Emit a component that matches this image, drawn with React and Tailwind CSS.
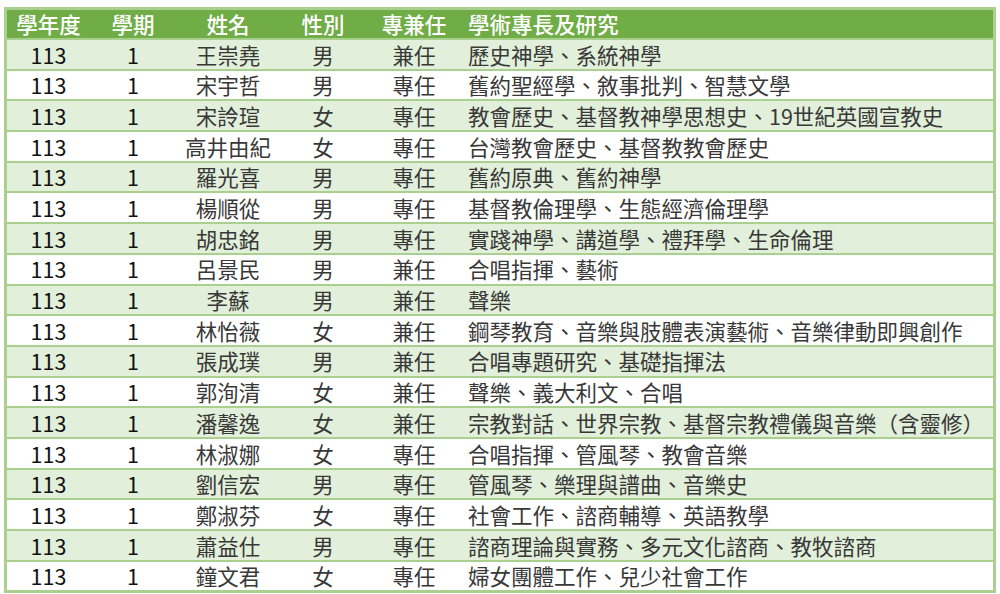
const rows = [
  ["王崇堯", "男", "兼任", "歷史神學、系統神學"],
  ["宋宇哲", "男", "專任", "舊約聖經學、敘事批判、智慧文學"],
  ["宋詅瑄", "女", "專任", "教會歷史、基督教神學思想史、19世紀英國宣教史"],
  ["高井由紀", "女", "專任", "台灣教會歷史、基督教教會歷史"],
  ["羅光喜", "男", "專任", "舊約原典、舊約神學"],
  ["楊順從", "男", "專任", "基督教倫理學、生態經濟倫理學"],
  ["胡忠銘", "男", "專任", "實踐神學、講道學、禮拜學、生命倫理"],
  ["呂景民", "男", "兼任", "合唱指揮、藝術"],
  ["李蘇", "男", "兼任", "聲樂"],
  ["林怡薇", "女", "兼任", "鋼琴教育、音樂與肢體表演藝術、音樂律動即興創作"],
  ["張成璞", "男", "兼任", "合唱專題研究、基礎指揮法"],
  ["郭洵清", "女", "兼任", "聲樂、義大利文、合唱"],
  ["潘馨逸", "女", "兼任", "宗教對話、世界宗教、基督宗教禮儀與音樂（含靈修）"],
  ["林淑娜", "女", "專任", "合唱指揮、管風琴、教會音樂"],
  ["劉信宏", "男", "專任", "管風琴、樂理與譜曲、音樂史"],
  ["鄭淑芬", "女", "專任", "社會工作、諮商輔導、英語教學"],
  ["蕭益仕", "男", "專任", "諮商理論與實務、多元文化諮商、教牧諮商"],
  ["鐘文君", "女", "專任", "婦女團體工作、兒少社會工作"],
];

const font = { fontFamily: '"Noto Sans CJK TC", "Noto Sans", sans-serif' };

export default function App() {
  return (
    <div className="w-[1000px] h-[594px] bg-white pt-[7px] pl-[4px]" style={font}>
      <div className="w-[992px] border-[3px] border-[#a9d08e] bg-[#a9d08e] flex flex-col gap-[2px]">
        <div className="flex h-[28px] items-center bg-[#70ad47] text-white text-[21.5px] font-medium leading-none">
          <div className="w-[83px] text-center">學年度</div>
          <div className="w-[86px] text-center">學期</div>
          <div className="w-[104px] text-center">姓名</div>
          <div className="w-[86px] text-center">性別</div>
          <div className="w-[96px] text-center">專兼任</div>
          <div className="flex-1 pl-[6px]">學術專長及研究</div>
        </div>
        {rows.map((r, i) => (
          <div
            key={i}
            className={`flex h-[28.7px] items-center text-[21.5px] leading-none text-[#383838] ${
              i % 2 === 0 ? "bg-[#e2efda]" : "bg-white"
            }`}
          >
            <div className="w-[83px] text-center text-[#111]">113</div>
            <div className="w-[86px] text-center text-[#111]">1</div>
            <div className="w-[104px] text-center">{r[0]}</div>
            <div className="w-[86px] text-center">{r[1]}</div>
            <div className="w-[96px] text-center">{r[2]}</div>
            <div className="flex-1 pl-[6px] whitespace-nowrap">{r[3]}</div>
          </div>
        ))}
      </div>
    </div>
  );
}
